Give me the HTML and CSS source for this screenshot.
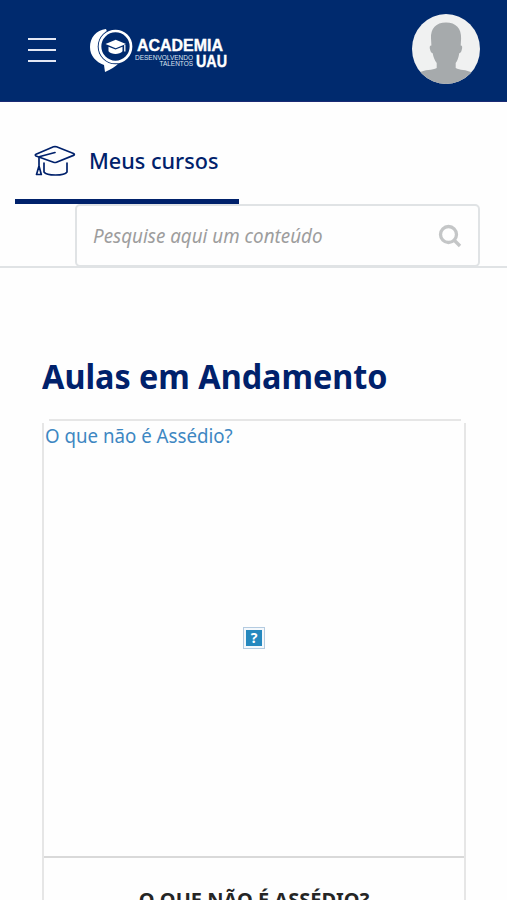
FILE: index.html
```html
<!DOCTYPE html>
<html lang="pt-BR">
<head>
<meta charset="utf-8">
<meta name="viewport" content="width=device-width, initial-scale=1">
<title>Academia UAU</title>
<link rel="stylesheet" href="styles.css">
</head>
<body>
<header class="topbar">
  <button class="menu" aria-label="Menu"><span></span><span></span><span></span></button>
  <svg class="logo" viewBox="0 0 142 48" width="142" height="48">
    <path d="M17 4C7 5 1 13 1 22c0 9 6 15 14 18l1 7c6-3 10-5 14-9Z" fill="#fff"/>
    <circle cx="26.500" cy="21.500" r="17.800" fill="#002a6e"/>
    <circle cx="26.500" cy="21.500" r="15.500" fill="#002a6e" stroke="#fff" stroke-width="2.700"/>
    <path d="m16.500 19 10.200-4.200L37 19l-10.300 4.200Z" fill="#fff"/>
    <path d="M19.500 21.800v4.500c3 3.600 11 3.600 14 0v-4.500l-7 2.800Z" fill="#fff"/>
    <path d="M35.800 20v6.500" stroke="#fff" stroke-width="1.300"/>
    <text class="logo-name" x="48" y="25.500" textLength="86" lengthAdjust="spacingAndGlyphs">ACADEMIA</text>
    <text class="logo-sub" x="46" y="34.500" textLength="58" lengthAdjust="spacingAndGlyphs">DESENVOLVENDO</text>
    <text class="logo-sub" x="70.500" y="41" textLength="33.500" lengthAdjust="spacingAndGlyphs">TALENTOS</text>
    <text class="logo-name" x="107" y="41.500" textLength="31" lengthAdjust="spacingAndGlyphs">UAU</text>
  </svg>
  <svg class="avatar" viewBox="0 0 68 70" width="68" height="70">
    <clipPath id="face"><ellipse cx="34" cy="35" rx="34" ry="35"/></clipPath>
    <g clip-path="url(#face)">
      <path fill="#f0f1f1" d="M0 0h68v70H0z"/>
      <path fill="#a6aaac" d="M34 8.500c-10 0-15.500 6-15 16l.4 7c-2 0-2 2-1.200 4.500.6 2.200 1.300 3 2.500 3.200.6 4 2 7 4 9.800v5c-4 2.500-12 1-18 5V70h54V59c-7-4-13-2.500-17-5v-5c2-2.800 3-5.800 3.500-9.800 1.200-.2 2-1 2.500-3.200.8-2.500.8-4.500-1-4.500l.4-7c.4-10-5.200-16-15.100-16Z"/>
    </g>
  </svg>
</header>
<nav class="toolbar">
  <a class="tab">
    <svg viewBox="0 0 42 32" width="42" height="32" fill="none" stroke="#00216b" stroke-width="1.700" stroke-linejoin="round" stroke-linecap="round">
      <path d="M2 9.200 19.500 1.800Q21 1.300 22.500 1.800L39.500 8.500Q41.200 9.500 39.500 10.400L22.500 17.200Q21 17.800 19.500 17.200L2 11Q.6 10 2 9.200Z"/>
      <path d="M21 7.500 6 11.500q-1 .5-1 1.500v8M10 18v9q2 3 11.500 3T33 27v-9M5 21l-2.500 8.500h4.800Z"/>
    </svg>
    <span>Meus cursos</span>
  </a>
  <div class="search">
    <span>Pesquise aqui um conteúdo</span>
    <svg viewBox="0 0 24 24" width="24" height="24" fill="none" stroke="#c4c6c7" stroke-width="3.300"><circle cx="10.500" cy="10.500" r="8"/><path d="m16 16 6 6"/></svg>
  </div>
</nav>
<main>
  <h1>Aulas em Andamento</h1>
  <article class="card">
    <div class="thumb">
      <span class="alt">O que não é Assédio?</span>
      <div class="missing"><span>?</span></div>
    </div>
    <h2>O QUE NÃO É ASSÉDIO?</h2>
  </article>
</main>
</body>
</html>
```
FILE: styles.css
```css
* { box-sizing: border-box; }
body { margin: 0; height: 900px; overflow: hidden; background: #fefefe; font-family: "Noto Sans", "Open Sans", sans-serif; }
.topbar { height: 102px; background: #002a6e; border-bottom: 1px solid #1b2a74; display: flex; align-items: flex-start; padding: 0 27px 0 28px; }
.menu { width: 28px; height: 24px; margin: 38px 33px 0 0; padding: 0; border: 0; background: none; display: flex; flex-direction: column; justify-content: space-between; }
.menu span { height: 2px; background: #e4e8f4; }
.logo { margin-top: 25px; overflow: visible; }
.logo text { font-family: "Liberation Sans", Arial, sans-serif; fill: #fff; }
.logo .logo-name { font-size: 17px; font-weight: 700; stroke: #fff; stroke-width: .4px; }
.logo .logo-sub { font-size: 7px; fill: #dce3f0; }
.avatar { margin: 14px 0 0 auto; }
.toolbar { height: 166px; padding: 16px 27px 0 15px; border-bottom: 2px solid #e0e3e5; }
.tab { width: 224px; height: 86px; border-bottom: 5px solid #00216b; display: flex; align-items: center; padding-left: 19px; color: #00216b; font-size: 22px; font-weight: 500; }
.tab svg { margin-top: 4px; }
.tab span { margin: 2px 0 0 13px; white-space: nowrap; transform: scaleX(.982); transform-origin: left; }
.search { height: 63px; margin-left: 60px; border: 2px solid #e0e3e5; border-radius: 5px; background: #fefefe; display: flex; align-items: center; justify-content: space-between; padding: 0 16px; color: #9d9d9d; font-size: 20px; font-style: italic; }
.search span { white-space: nowrap; transform: scaleX(.94); transform-origin: left; }
main { padding: 84px 41px 0 42px; }
h1 { margin: 0; color: #00216b; font-size: 34px; line-height: 48px; font-weight: 700; white-space: nowrap; transform: scaleX(.951); transform-origin: left; }
.card { margin-top: 19px; height: 500px; position: relative; border: solid #e6e6e6; border-width: 0 2px; border-image: linear-gradient(transparent 5px, #e6e6e6 5px) 1; border-image-width: 0 2px; }
.card::before { content: ""; position: absolute; top: 0; left: 5px; right: 3px; height: 2px; background: #e6e6e6; }
.thumb { height: 439px; border-bottom: 2px solid #d9d9d9; position: relative; display: grid; place-items: center; }
.alt { position: absolute; left: 1px; top: 4px; color: #3d87c2; font-size: 20px; line-height: 26px; white-space: nowrap; transform: scaleX(.935); transform-origin: left; }
.missing { width: 22px; height: 22px; border: 1px solid #b4cbe0; padding: 2px; background: #f4f8fc; }
.missing span { display: block; height: 16px; background: #2588be; color: #fff; font-size: 14px; line-height: 16px; font-weight: 700; text-align: center; }
h2 { margin: 28px 0 0; color: #252525; font-size: 20px; line-height: 28px; font-weight: 700; text-align: center; white-space: nowrap; }
```
